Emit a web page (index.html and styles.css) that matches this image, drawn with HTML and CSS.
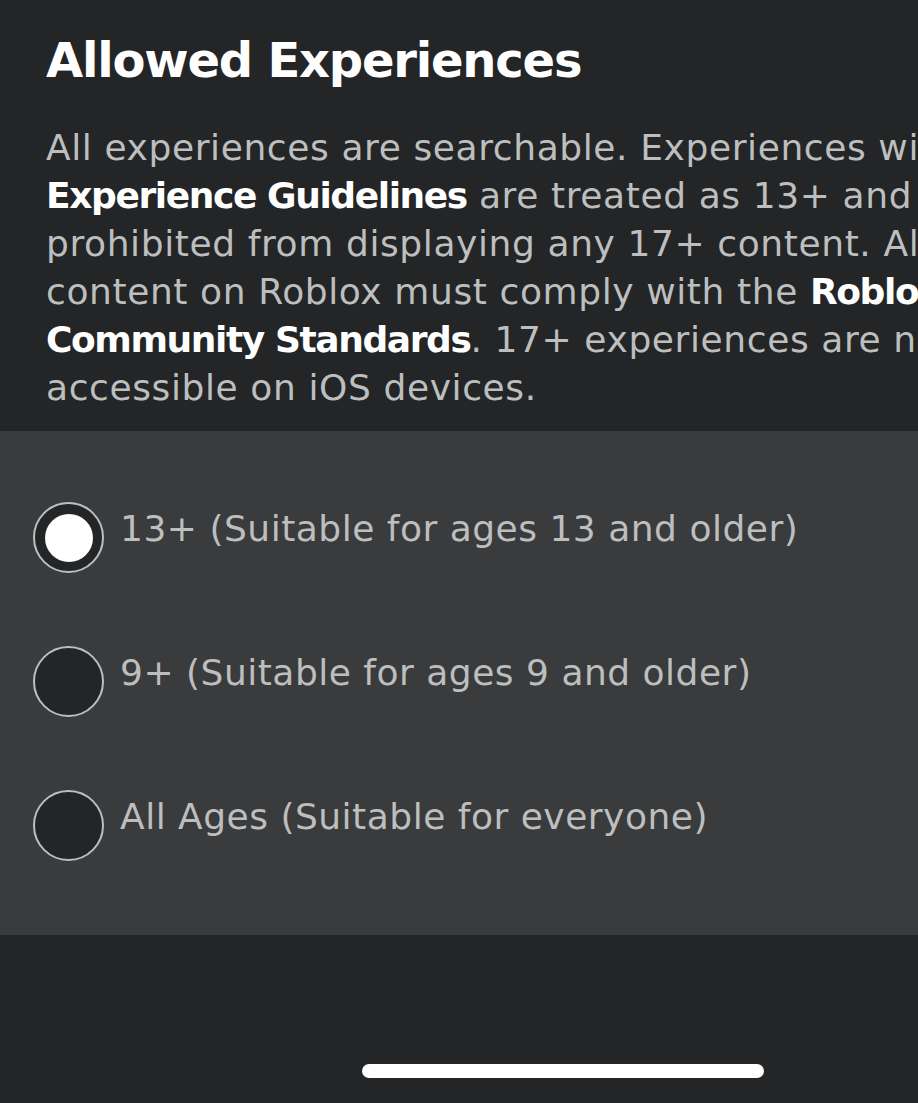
FILE: index.html
```html
<!DOCTYPE html>
<html>
<head>
<meta charset="utf-8">
<link rel="stylesheet" href="styles.css">
</head>
<body>
<div class="page">
  <header class="intro">
    <h1 class="title">Allowed Experiences</h1>
    <p class="desc">All experiences are searchable. Experiences without<br><b>Experience Guidelines</b> are treated as 13+ and are<br>prohibited from displaying any 17+ content. All<br>content on Roblox must comply with the <b>Roblox</b><br><b>Community Standards</b>. 17+ experiences are not<br>accessible on iOS devices.</p>
  </header>
  <section class="options">
    <div class="option">
      <span class="radio selected"></span>
      <span class="label">13+ (Suitable for ages 13 and older)</span>
    </div>
    <div class="option">
      <span class="radio"></span>
      <span class="label">9+ (Suitable for ages 9 and older)</span>
    </div>
    <div class="option">
      <span class="radio"></span>
      <span class="label">All Ages (Suitable for everyone)</span>
    </div>
  </section>
  <footer class="bottom">
    <span class="home-indicator"></span>
  </footer>
</div>
</body>
</html>
```

FILE: styles.css
```css
html, body {
  margin: 0;
  padding: 0;
  background: #232527;
}
.page {
  width: 918px;
  height: 1103px;
  overflow: hidden;
  display: flex;
  flex-direction: column;
  font-family: "DejaVu Sans", "Noto Sans", sans-serif;
}
.intro {
  height: 431px;
  box-sizing: border-box;
  padding: 30px 0 0 46px;
  flex: none;
  overflow: hidden;
}
.title {
  margin: 0;
  font-size: 48px;
  line-height: 60px;
  letter-spacing: -1.2px;
  font-weight: bold;
  color: #ffffff;
}
.desc {
  margin: 34px 0 0;
  font-size: 36px;
  line-height: 48px;
  letter-spacing: 0.6px;
  color: #bdbebe;
  white-space: nowrap;
}
.desc b {
  color: #ffffff;
  font-weight: bold;
  letter-spacing: -1.4px;
}
.options {
  height: 504px;
  flex: none;
  background: #393b3d;
  box-sizing: border-box;
  padding: 71px 0 0 33px;
  display: flex;
  flex-direction: column;
  gap: 73px;
}
.option {
  display: flex;
  align-items: flex-start;
  gap: 16px;
  height: 71px;
}
.radio {
  width: 71px;
  height: 71px;
  box-sizing: border-box;
  border: 2px solid #bdbebe;
  border-radius: 50%;
  background: #232527;
  display: flex;
  align-items: center;
  justify-content: center;
  flex: none;
}
.radio.selected::after {
  content: "";
  width: 48px;
  height: 48px;
  border-radius: 50%;
  background: #ffffff;
}
.label {
  font-size: 36px;
  line-height: 48px;
  letter-spacing: 0.5px;
  color: #bdbebe;
  margin-top: 3px;
  white-space: nowrap;
}
.bottom {
  flex: 1;
  display: flex;
  justify-content: center;
  align-items: flex-end;
  padding-bottom: 25px;
}
.home-indicator {
  width: 402px;
  height: 14px;
  border-radius: 7px;
  background: #ffffff;
  margin-left: 208px;
}
```
